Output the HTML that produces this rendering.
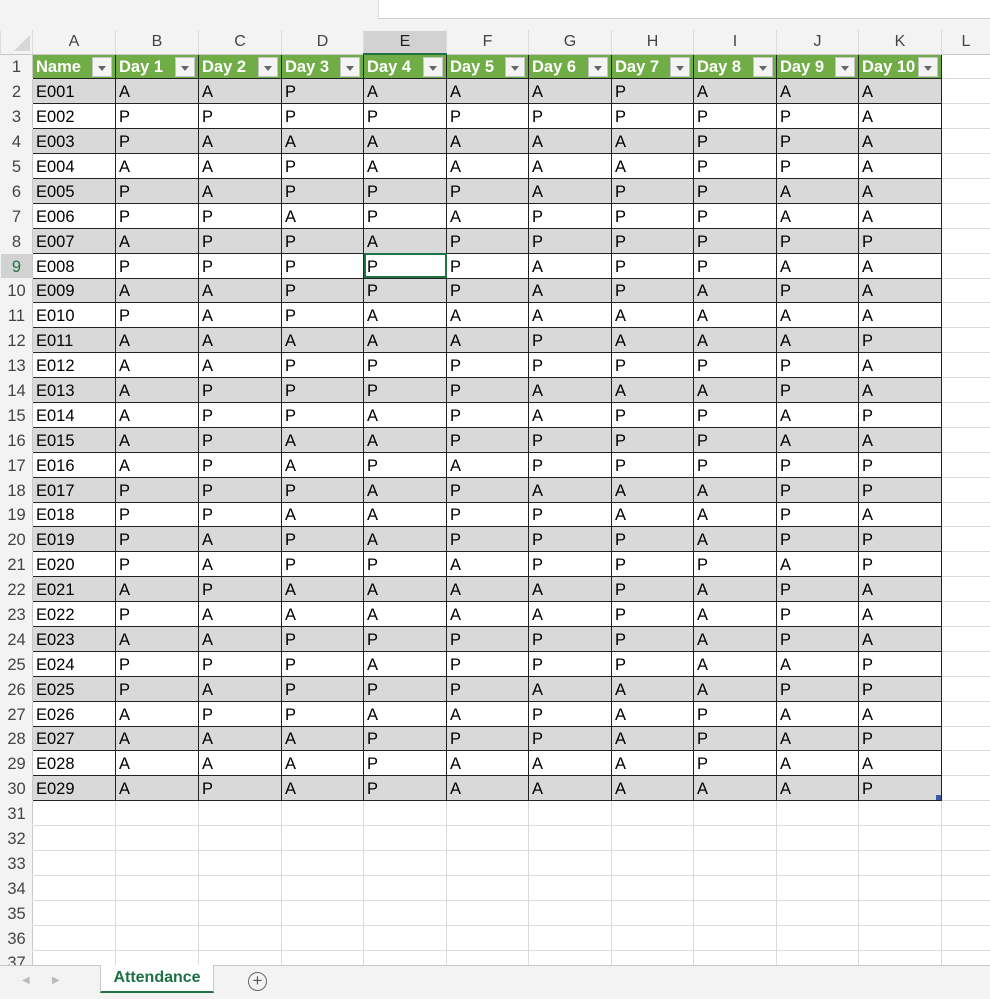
<!DOCTYPE html>
<html><head><meta charset="utf-8"><style>
*{margin:0;padding:0;box-sizing:border-box}
body{width:990px;height:999px;overflow:hidden;background:#fff;font-family:"Liberation Sans",sans-serif;position:relative}
.top{position:absolute;left:0;top:0;width:990px;height:30px;background:#f3f3f3}
.fb{position:absolute;left:378px;top:0;width:612px;height:19px;background:#fff;border-left:1px solid #ddd;border-bottom:1px solid #d0d0d0}
table{position:absolute;left:0;top:30px;border-collapse:collapse;table-layout:fixed;width:989px}
td{height:24.9px;font-size:16.5px;color:#000;padding:0 0 0 3px;white-space:nowrap;overflow:hidden;border:1px solid #dadada;line-height:22px;vertical-align:bottom}
tr.ch td{height:23px;background:#f3f3f3;color:#444;text-align:center;font-size:16px;padding:0;border-color:#f3f3f3 #dcdcdc #c8c8c8 #dcdcdc;border-bottom:1px solid #c8c8c8;vertical-align:middle}
td.rh{background:#f3f3f3;color:#444;text-align:center;padding:0;border-color:#f3f3f3;border-right:1px solid #c8c8c8}
tr.hd td.c{background:#70ad47;color:#fff;font-weight:bold;position:relative;border:1px solid #222}
tr.hd td.c i{position:absolute;right:3px;top:2px;width:20px;height:20px;background:#f4f4f4;border:1px solid #c4c4c4}
tr.hd td.c i:after{content:"";position:absolute;left:5px;top:8px;border:4px solid transparent;border-top:5px solid #666;border-bottom:0}
tr.d td.c{border:1px solid #222}
tr.g td.c{background:#d9d9d9}
.sel{background:#d2d2d2!important;border-bottom:2px solid #217346!important;color:#222!important}
.cur{outline:2px solid #217346;outline-offset:-2px;position:relative}
.tabs{position:absolute;left:0;top:965px;width:990px;height:34px;background:#f3f3f3;border-top:1px solid #c8c8c8}
.tab{position:absolute;left:100px;top:-1px;width:114px;height:28px;background:#fff;border:1px solid #c8c8c8;border-top:none;border-bottom:2px solid #217346;color:#1e7145;font-weight:bold;font-size:16px;text-align:center;line-height:26px}
.plus{position:absolute;left:248px;top:6px;width:19px;height:19px;border:1.5px solid #666;border-radius:50%;color:#555;font-size:17px;line-height:15px;text-align:center}
.arr{position:absolute;top:9px;color:#bbb;font-size:10px}
</style></head><body>
<div class="top"><div class="fb"></div></div>
<table>
<colgroup><col style="width:32px"><col style="width:83px"><col style="width:83px"><col style="width:83px"><col style="width:82px"><col style="width:83px"><col style="width:82px"><col style="width:83px"><col style="width:82px"><col style="width:83px"><col style="width:82px"><col style="width:83px"><col style="width:49px"></colgroup>
<tr class="ch"><td></td><td>A</td><td>B</td><td>C</td><td>D</td><td class="sel">E</td><td>F</td><td>G</td><td>H</td><td>I</td><td>J</td><td>K</td><td>L</td></tr>
<tr class="hd"><td class="rh">1</td><td class="c">Name<i></i></td><td class="c">Day 1<i></i></td><td class="c">Day 2<i></i></td><td class="c">Day 3<i></i></td><td class="c">Day 4<i></i></td><td class="c">Day 5<i></i></td><td class="c">Day 6<i></i></td><td class="c">Day 7<i></i></td><td class="c">Day 8<i></i></td><td class="c">Day 9<i></i></td><td class="c">Day 10<i></i></td><td></td></tr>
<tr class="d g"><td class="rh">2</td><td class="c">E001</td><td class="c">A</td><td class="c">A</td><td class="c">P</td><td class="c">A</td><td class="c">A</td><td class="c">A</td><td class="c">P</td><td class="c">A</td><td class="c">A</td><td class="c">A</td><td></td></tr>
<tr class="d"><td class="rh">3</td><td class="c">E002</td><td class="c">P</td><td class="c">P</td><td class="c">P</td><td class="c">P</td><td class="c">P</td><td class="c">P</td><td class="c">P</td><td class="c">P</td><td class="c">P</td><td class="c">A</td><td></td></tr>
<tr class="d g"><td class="rh">4</td><td class="c">E003</td><td class="c">P</td><td class="c">A</td><td class="c">A</td><td class="c">A</td><td class="c">A</td><td class="c">A</td><td class="c">A</td><td class="c">P</td><td class="c">P</td><td class="c">A</td><td></td></tr>
<tr class="d"><td class="rh">5</td><td class="c">E004</td><td class="c">A</td><td class="c">A</td><td class="c">P</td><td class="c">A</td><td class="c">A</td><td class="c">A</td><td class="c">A</td><td class="c">P</td><td class="c">P</td><td class="c">A</td><td></td></tr>
<tr class="d g"><td class="rh">6</td><td class="c">E005</td><td class="c">P</td><td class="c">A</td><td class="c">P</td><td class="c">P</td><td class="c">P</td><td class="c">A</td><td class="c">P</td><td class="c">P</td><td class="c">A</td><td class="c">A</td><td></td></tr>
<tr class="d"><td class="rh">7</td><td class="c">E006</td><td class="c">P</td><td class="c">P</td><td class="c">A</td><td class="c">P</td><td class="c">A</td><td class="c">P</td><td class="c">P</td><td class="c">P</td><td class="c">A</td><td class="c">A</td><td></td></tr>
<tr class="d g"><td class="rh">8</td><td class="c">E007</td><td class="c">A</td><td class="c">P</td><td class="c">P</td><td class="c">A</td><td class="c">P</td><td class="c">P</td><td class="c">P</td><td class="c">P</td><td class="c">P</td><td class="c">P</td><td></td></tr>
<tr class="d"><td class="rh" style="color:#217346;background:#d2d2d2">9</td><td class="c">E008</td><td class="c">P</td><td class="c">P</td><td class="c">P</td><td class="c cur">P</td><td class="c">P</td><td class="c">A</td><td class="c">P</td><td class="c">P</td><td class="c">A</td><td class="c">A</td><td></td></tr>
<tr class="d g"><td class="rh">10</td><td class="c">E009</td><td class="c">A</td><td class="c">A</td><td class="c">P</td><td class="c">P</td><td class="c">P</td><td class="c">A</td><td class="c">P</td><td class="c">A</td><td class="c">P</td><td class="c">A</td><td></td></tr>
<tr class="d"><td class="rh">11</td><td class="c">E010</td><td class="c">P</td><td class="c">A</td><td class="c">P</td><td class="c">A</td><td class="c">A</td><td class="c">A</td><td class="c">A</td><td class="c">A</td><td class="c">A</td><td class="c">A</td><td></td></tr>
<tr class="d g"><td class="rh">12</td><td class="c">E011</td><td class="c">A</td><td class="c">A</td><td class="c">A</td><td class="c">A</td><td class="c">A</td><td class="c">P</td><td class="c">A</td><td class="c">A</td><td class="c">A</td><td class="c">P</td><td></td></tr>
<tr class="d"><td class="rh">13</td><td class="c">E012</td><td class="c">A</td><td class="c">A</td><td class="c">P</td><td class="c">P</td><td class="c">P</td><td class="c">P</td><td class="c">P</td><td class="c">P</td><td class="c">P</td><td class="c">A</td><td></td></tr>
<tr class="d g"><td class="rh">14</td><td class="c">E013</td><td class="c">A</td><td class="c">P</td><td class="c">P</td><td class="c">P</td><td class="c">P</td><td class="c">A</td><td class="c">A</td><td class="c">A</td><td class="c">P</td><td class="c">A</td><td></td></tr>
<tr class="d"><td class="rh">15</td><td class="c">E014</td><td class="c">A</td><td class="c">P</td><td class="c">P</td><td class="c">A</td><td class="c">P</td><td class="c">A</td><td class="c">P</td><td class="c">P</td><td class="c">A</td><td class="c">P</td><td></td></tr>
<tr class="d g"><td class="rh">16</td><td class="c">E015</td><td class="c">A</td><td class="c">P</td><td class="c">A</td><td class="c">A</td><td class="c">P</td><td class="c">P</td><td class="c">P</td><td class="c">P</td><td class="c">A</td><td class="c">A</td><td></td></tr>
<tr class="d"><td class="rh">17</td><td class="c">E016</td><td class="c">A</td><td class="c">P</td><td class="c">A</td><td class="c">P</td><td class="c">A</td><td class="c">P</td><td class="c">P</td><td class="c">P</td><td class="c">P</td><td class="c">P</td><td></td></tr>
<tr class="d g"><td class="rh">18</td><td class="c">E017</td><td class="c">P</td><td class="c">P</td><td class="c">P</td><td class="c">A</td><td class="c">P</td><td class="c">A</td><td class="c">A</td><td class="c">A</td><td class="c">P</td><td class="c">P</td><td></td></tr>
<tr class="d"><td class="rh">19</td><td class="c">E018</td><td class="c">P</td><td class="c">P</td><td class="c">A</td><td class="c">A</td><td class="c">P</td><td class="c">P</td><td class="c">A</td><td class="c">A</td><td class="c">P</td><td class="c">A</td><td></td></tr>
<tr class="d g"><td class="rh">20</td><td class="c">E019</td><td class="c">P</td><td class="c">A</td><td class="c">P</td><td class="c">A</td><td class="c">P</td><td class="c">P</td><td class="c">P</td><td class="c">A</td><td class="c">P</td><td class="c">P</td><td></td></tr>
<tr class="d"><td class="rh">21</td><td class="c">E020</td><td class="c">P</td><td class="c">A</td><td class="c">P</td><td class="c">P</td><td class="c">A</td><td class="c">P</td><td class="c">P</td><td class="c">P</td><td class="c">A</td><td class="c">P</td><td></td></tr>
<tr class="d g"><td class="rh">22</td><td class="c">E021</td><td class="c">A</td><td class="c">P</td><td class="c">A</td><td class="c">A</td><td class="c">A</td><td class="c">A</td><td class="c">P</td><td class="c">A</td><td class="c">P</td><td class="c">A</td><td></td></tr>
<tr class="d"><td class="rh">23</td><td class="c">E022</td><td class="c">P</td><td class="c">A</td><td class="c">A</td><td class="c">A</td><td class="c">A</td><td class="c">A</td><td class="c">P</td><td class="c">A</td><td class="c">P</td><td class="c">A</td><td></td></tr>
<tr class="d g"><td class="rh">24</td><td class="c">E023</td><td class="c">A</td><td class="c">A</td><td class="c">P</td><td class="c">P</td><td class="c">P</td><td class="c">P</td><td class="c">P</td><td class="c">A</td><td class="c">P</td><td class="c">A</td><td></td></tr>
<tr class="d"><td class="rh">25</td><td class="c">E024</td><td class="c">P</td><td class="c">P</td><td class="c">P</td><td class="c">A</td><td class="c">P</td><td class="c">P</td><td class="c">P</td><td class="c">A</td><td class="c">A</td><td class="c">P</td><td></td></tr>
<tr class="d g"><td class="rh">26</td><td class="c">E025</td><td class="c">P</td><td class="c">A</td><td class="c">P</td><td class="c">P</td><td class="c">P</td><td class="c">A</td><td class="c">A</td><td class="c">A</td><td class="c">P</td><td class="c">P</td><td></td></tr>
<tr class="d"><td class="rh">27</td><td class="c">E026</td><td class="c">A</td><td class="c">P</td><td class="c">P</td><td class="c">A</td><td class="c">A</td><td class="c">P</td><td class="c">A</td><td class="c">P</td><td class="c">A</td><td class="c">A</td><td></td></tr>
<tr class="d g"><td class="rh">28</td><td class="c">E027</td><td class="c">A</td><td class="c">A</td><td class="c">A</td><td class="c">P</td><td class="c">P</td><td class="c">P</td><td class="c">A</td><td class="c">P</td><td class="c">A</td><td class="c">P</td><td></td></tr>
<tr class="d"><td class="rh">29</td><td class="c">E028</td><td class="c">A</td><td class="c">A</td><td class="c">A</td><td class="c">P</td><td class="c">A</td><td class="c">A</td><td class="c">A</td><td class="c">P</td><td class="c">A</td><td class="c">A</td><td></td></tr>
<tr class="d g"><td class="rh">30</td><td class="c">E029</td><td class="c">A</td><td class="c">P</td><td class="c">A</td><td class="c">P</td><td class="c">A</td><td class="c">A</td><td class="c">A</td><td class="c">A</td><td class="c">A</td><td class="c" style="position:relative">P<span style="position:absolute;right:0;bottom:0;width:5px;height:5px;background:#3c5aa8"></span></td><td></td></tr>
<tr><td class="rh">31</td><td></td><td></td><td></td><td></td><td></td><td></td><td></td><td></td><td></td><td></td><td></td><td></td></tr>
<tr><td class="rh">32</td><td></td><td></td><td></td><td></td><td></td><td></td><td></td><td></td><td></td><td></td><td></td><td></td></tr>
<tr><td class="rh">33</td><td></td><td></td><td></td><td></td><td></td><td></td><td></td><td></td><td></td><td></td><td></td><td></td></tr>
<tr><td class="rh">34</td><td></td><td></td><td></td><td></td><td></td><td></td><td></td><td></td><td></td><td></td><td></td><td></td></tr>
<tr><td class="rh">35</td><td></td><td></td><td></td><td></td><td></td><td></td><td></td><td></td><td></td><td></td><td></td><td></td></tr>
<tr><td class="rh">36</td><td></td><td></td><td></td><td></td><td></td><td></td><td></td><td></td><td></td><td></td><td></td><td></td></tr>
<tr><td class="rh">37</td><td></td><td></td><td></td><td></td><td></td><td></td><td></td><td></td><td></td><td></td><td></td><td></td></tr>
</table>
<svg style="position:absolute;left:12px;top:35px" width="18" height="16"><polygon points="18,0 18,16 2,16" fill="#d7d7d7"/></svg>
<div class="tabs">
<span class="arr" style="left:22px">◀</span><span class="arr" style="left:52px">▶</span>
<div class="tab">Attendance</div>
<div class="plus">+</div>
</div>
</body></html>
